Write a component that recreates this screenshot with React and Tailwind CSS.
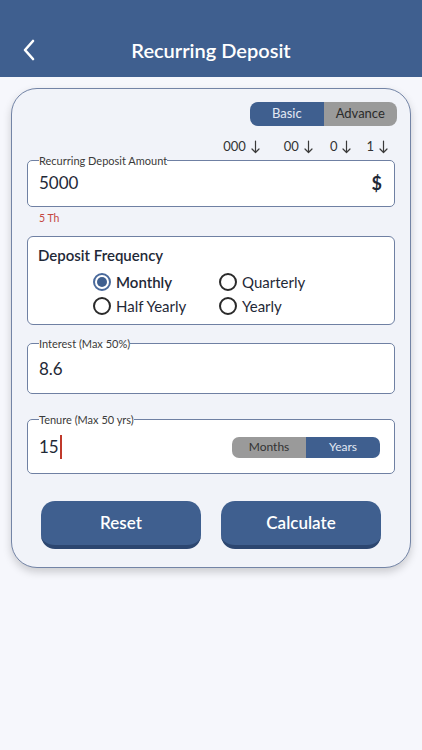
import React from "react";

const font = { fontFamily: "Lato, 'Open Sans', sans-serif" };

function Radio({ checked, label }) {
  return (
    <div className="flex items-center h-[24px] gap-[5px]">
      {checked ? (
        <span className="w-[18px] h-[18px] rounded-full border-2 border-[#4a6a9c] bg-white flex items-center justify-center">
          <span className="w-[10px] h-[10px] rounded-full bg-[#3f5f8f]" />
        </span>
      ) : (
        <span className="w-[18px] h-[18px] rounded-full border-2 border-[#2a2a2a] bg-white" />
      )}
      <span className={`text-[15px] text-[#1f2937] ${checked ? "font-semibold" : ""}`}>{label}</span>
    </div>
  );
}

function Field({ label, children, className = "" }) {
  return (
    <fieldset className={`border border-[#6f80a3] rounded-[5px] bg-white px-[11px] ${className}`}>
      <legend className="text-[11px] leading-[13px] text-[#3a3a3a] px-0">{label}</legend>
      {children}
    </fieldset>
  );
}

function Arrow() {
  return (
    <svg className="ml-[5px]" width="9" height="14" viewBox="0 0 9 14">
      <path d="M4.5 1 V12.5 M1 9 L4.5 12.5 L8 9" fill="none" stroke="#3a3a3a" strokeWidth="1.2" strokeLinecap="round" strokeLinejoin="round" />
    </svg>
  );
}

function Digit({ text, className = "" }) {
  return (
    <div className={`flex items-center ${className}`}>
      <span>{text}</span>
      <Arrow />
    </div>
  );
}

export default function App() {
  return (
    <div style={font} className="w-[422px] h-[750px] bg-[#f6f7fc] overflow-hidden">
      <div className="h-[77px] bg-[#3f5f8f] relative">
        <div className="pt-[36px] flex items-center justify-center h-[64px]">
          <svg className="absolute left-[22px] top-[39px]" width="14" height="22" viewBox="0 0 14 22">
            <path d="M11 2 L3 11 L11 20" fill="none" stroke="white" strokeWidth="2.6" strokeLinecap="round" strokeLinejoin="round" />
          </svg>
          <h1 className="text-[20px] leading-[28px] font-semibold text-white">Recurring Deposit</h1>
        </div>
      </div>

      <div className="mx-[11px] mt-[11px] bg-[#f1f3f9] border border-[#7384a6] rounded-[26px] px-[15px] pt-[13px] pb-[18px] shadow-[0_4px_8px_rgba(0,0,0,0.18)]">
        <div className="flex justify-end -mr-[2px]">
          <div className="flex h-[24px] w-[147px] rounded-[8px] overflow-hidden text-[13px]">
            <div className="flex-1 bg-[#3f5f8f] text-[#e3e9f4] flex items-center justify-center">Basic</div>
            <div className="flex-1 bg-[#9a9a9a] text-[#2b2b2b] flex items-center justify-center">Advance</div>
          </div>
        </div>

        <div className="flex justify-end mt-[14px] h-[14px] items-center text-[13px] text-[#333] pr-[7px]">
          <Digit text="000" />
          <Digit text="00" className="ml-[24px]" />
          <Digit text="0" className="ml-[17px]" />
          <Digit text="1" className="ml-[15px]" />
        </div>

        <Field label="Recurring Deposit Amount" className="mt-0 pt-[4px] pb-[11px]">
          <div className="flex items-center justify-between h-[24px]">
            <span className="text-[17px] text-[#1f2937]">5000</span>
            <span className="text-[18px] font-bold text-[#1f2937] mr-[1px]">$</span>
          </div>
        </Field>

        <div className="text-[10.5px] leading-[12px] text-[#c4473f] pl-[12px] mt-[5px]">5 Th</div>

        <div className="mt-[12px] border border-[#6f80a3] rounded-[6px] bg-white pt-[8px] pb-[6px] px-[10px]">
          <div className="text-[15px] leading-[20px] font-semibold text-[#1f2937]">Deposit Frequency</div>
          <div className="mt-[5px] grid grid-cols-[126px_126px] pl-[55px]">
            <Radio checked label="Monthly" />
            <Radio label="Quarterly" />
            <Radio label="Half Yearly" />
            <Radio label="Yearly" />
          </div>
        </div>

        <Field label="Interest (Max 50%)" className="mt-[12px] pt-[7px] pb-[12px]">
          <div className="h-[24px] flex items-center text-[17px] text-[#1f2937]">8.6</div>
        </Field>

        <Field label="Tenure (Max 50 yrs)" className="mt-[19px] pt-[7px] pb-[12px]">
          <div className="flex items-center justify-between h-[28px]">
            <div className="flex items-center text-[17px] text-[#1f2937]">
              15<span className="w-[2px] h-[24px] bg-[#c0392b] ml-[1px]" />
            </div>
            <div className="flex h-[21px] w-[148px] rounded-[7px] overflow-hidden text-[12px] mr-[3px]">
              <div className="flex-1 bg-[#9a9a9a] text-[#333] flex items-center justify-center">Months</div>
              <div className="flex-1 bg-[#3f5f8f] text-[#e3e9f4] flex items-center justify-center">Years</div>
            </div>
          </div>
        </Field>

        <div className="mt-[27px] px-[14px] flex gap-[20px]">
          <button className="w-[160px] h-[48px] rounded-[14px] bg-[#3f5f8f] border-b-[4px] border-[#2c4670] text-white text-[17px] font-semibold">Reset</button>
          <button className="w-[160px] h-[48px] rounded-[14px] bg-[#3f5f8f] border-b-[4px] border-[#2c4670] text-white text-[17px] font-semibold">Calculate</button>
        </div>
      </div>
    </div>
  );
}
